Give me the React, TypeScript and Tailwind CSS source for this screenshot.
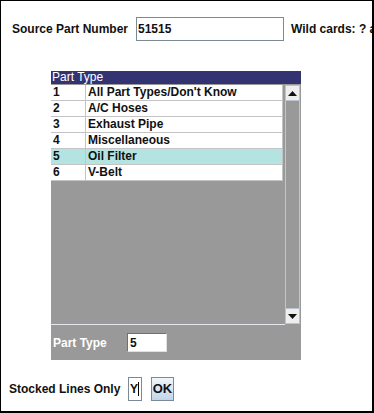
import React from "react";

const rows = [
  { id: "1", name: "All Part Types/Don't Know" },
  { id: "2", name: "A/C Hoses" },
  { id: "3", name: "Exhaust Pipe" },
  { id: "4", name: "Miscellaneous" },
  { id: "5", name: "Oil Filter", selected: true },
  { id: "6", name: "V-Belt" },
];

export default function App() {
  return (
    <div
      className="w-[374px] h-[413px] bg-white border-black border-l border-t border-r-2 border-b-2 overflow-hidden text-[12px] text-[#111]"
      style={{ fontFamily: '"Liberation Sans", Arial, sans-serif' }}
    >
      {/* Source part number */}
      <div className="flex items-center pl-[11px] mt-[16px] whitespace-nowrap">
        <span className="w-[124px] shrink-0 font-bold">Source Part Number</span>
        <div className="w-[148px] h-[24px] shrink-0 border border-[#7a8a99] flex items-center pl-[1px] font-bold">
          51515
        </div>
        <span className="ml-[7px] shrink-0 font-bold">Wild cards: ? and * allowed</span>
      </div>

      {/* Part type panel */}
      <div className="ml-[50px] mt-[30px] w-[250px] bg-[#999999]">
        <div className="h-[13px] bg-[#333372] text-white leading-[13px] pl-[1px]">Part Type</div>
        <div className="flex h-[240px] pt-[1px]">
          <div className="w-[232px]">
            {rows.map((r) => (
              <div
                key={r.id}
                className={`flex h-[16px] border-b border-r border-[#c4c4c4] font-bold leading-[15px] ${
                  r.selected ? "bg-[#b4e4e2]" : "bg-white"
                }`}
              >
                <span className="w-[35px] pl-[2px] border-r border-[#c4c4c4]">{r.id}</span>
                <span className="pl-[2px]">{r.name}</span>
              </div>
            ))}
          </div>
          {/* scrollbar */}
          <div className="ml-[2px] w-[15px] flex flex-col">
            <div className="h-[16px] bg-[#eeeeee] border border-[#b8c4d2] flex items-center justify-center">
              <svg width="9" height="5" viewBox="0 0 9 5">
                <path d="M0 5 L4.5 0 L9 5 Z" fill="#111" />
              </svg>
            </div>
            <div className="flex-1 border-x border-[#b8c8dc]" />
            <div className="h-[16px] bg-[#eeeeee] border border-[#b8c4d2] flex items-center justify-center">
              <svg width="9" height="5" viewBox="0 0 9 5">
                <path d="M0 0 L4.5 5 L9 0 Z" fill="#111" />
              </svg>
            </div>
          </div>
        </div>
        <div className="h-[1px] bg-[#e4e8ee] mr-[16px]" />
        <div className="h-[35px] flex items-center">
          <span className="w-[76px] shrink-0 pl-[2px] text-white font-bold">Part Type</span>
          <div className="w-[40px] h-[19px] bg-white border-t border-l border-[#707070] border-r border-b border-r-[#e0e0e0] border-b-[#e0e0e0] flex items-center pl-[2px] font-bold">
            5
          </div>
        </div>
      </div>

      {/* Stocked lines */}
      <div className="flex items-center pl-[8px] mt-[17px]">
        <span className="w-[119px] shrink-0 font-bold">Stocked Lines Only</span>
        <div className="w-[14px] h-[24px] shrink-0 border border-[#7a8a99] flex items-center pl-[1px] font-bold">
          Y<span className="w-[1px] h-[14px] bg-black" />
        </div>
        <button className="ml-[9px] w-[23px] h-[24px] shrink-0 border border-[#7a8a99] bg-gradient-to-b from-[#f0f5fa] to-[#c2d5e8] font-bold text-[13px] flex items-center justify-center">
          OK
        </button>
      </div>
    </div>
  );
}
